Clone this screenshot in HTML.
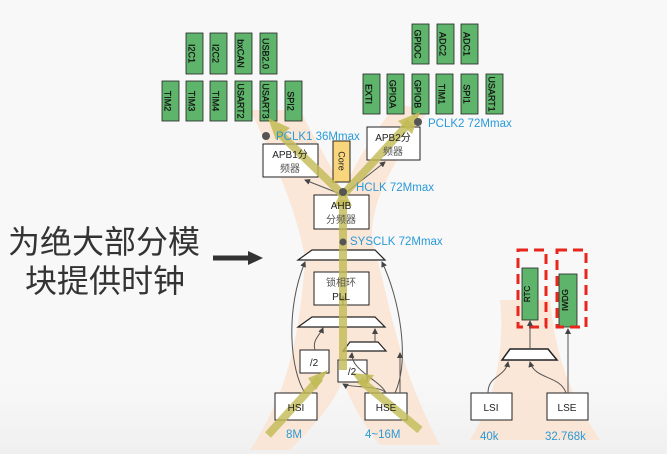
<!DOCTYPE html>
<html><head><meta charset="utf-8"><style>
html,body{margin:0;padding:0;}
body{width:667px;height:454px;overflow:hidden;background:linear-gradient(#f8f8f8,#f8f8f8 380px,#f0f0f0 454px);font-family:"Liberation Sans","Noto Sans CJK SC",sans-serif;}
svg{position:absolute;left:0;top:0;}
</style></head><body>
<svg width="667" height="454" viewBox="0 0 667 454" xmlns="http://www.w3.org/2000/svg">
<defs>
<marker id="ah" markerWidth="6" markerHeight="6" refX="5" refY="3" orient="auto"><path d="M0,0 L6,3 L0,6 z" fill="#444"/></marker>
</defs>
<path d="M250,110 L300,110 C320,150 335,170 343,195 C350,170 370,140 395,105 L430,108 C395,160 370,200 372,240 C390,300 395,360 440,445 L380,445 C360,420 350,400 343,380 C335,400 320,420 290,450 L250,450 C290,390 300,330 305,260 C300,220 275,160 250,110 Z" fill="#fbe4d4" opacity="0.9"/>
<path d="M500,300 L550,300 C555,340 560,380 600,440 L470,440 C495,400 505,350 500,300 Z" fill="#fbe4d4" opacity="0.9"/>
<text x="8" y="253" font-size="32" fill="#333" font-family="Noto Sans CJK SC,sans-serif">为绝大部分模</text>
<text x="25" y="292" font-size="32" fill="#333" font-family="Noto Sans CJK SC,sans-serif">块提供时钟</text>
<line x1="213" y1="258" x2="250" y2="258" stroke="#333" stroke-width="5"/>
<path d="M248,251 L263,258 L248,265 Z" fill="#333"/>
<g stroke="#222" stroke-width="0.8" fill="#5fb46c">
<rect x="186" y="33" width="17" height="41"/><rect x="210" y="33" width="17" height="41"/><rect x="235" y="33" width="17" height="41"/><rect x="260" y="33" width="17" height="41"/>
<rect x="162" y="81" width="17" height="40"/><rect x="186" y="81" width="17" height="40"/><rect x="210" y="81" width="17" height="40"/><rect x="235" y="81" width="17" height="40"/><rect x="260" y="81" width="17" height="40"/><rect x="285" y="81" width="17" height="40"/>
<rect x="412" y="24" width="17" height="40"/><rect x="437" y="24" width="17" height="40"/><rect x="461" y="24" width="17" height="40"/>
<rect x="363" y="74" width="17" height="40"/><rect x="387" y="74" width="17" height="40"/><rect x="412" y="74" width="17" height="40"/><rect x="436" y="74" width="17" height="40"/><rect x="461" y="74" width="17" height="40"/><rect x="486" y="74" width="17" height="40"/>
<rect x="522" y="268" width="16" height="52"/><rect x="559" y="274" width="18" height="53"/>
</g>
<g font-family="Liberation Sans,sans-serif" font-size="9" fill="#111" stroke="#111" stroke-width="0.25" text-anchor="middle">
<text transform="translate(191.5,53.5) rotate(90)" dy="3">I2C1</text>
<text transform="translate(215.5,53.5) rotate(90)" dy="3">I2C2</text>
<text transform="translate(240.5,53.5) rotate(90)" dy="3">bxCAN</text>
<text transform="translate(265.5,53.5) rotate(90)" dy="3">USB2.0</text>
<text transform="translate(167.5,101) rotate(90)" dy="3">TIM2</text>
<text transform="translate(191.5,101) rotate(90)" dy="3">TIM3</text>
<text transform="translate(215.5,101) rotate(90)" dy="3">TIM4</text>
<text transform="translate(240.5,101) rotate(90)" dy="3">USART2</text>
<text transform="translate(265.5,101) rotate(90)" dy="3">USART3</text>
<text transform="translate(290.5,101) rotate(90)" dy="3">SPI2</text>
<text transform="translate(417.5,44) rotate(90)" dy="3">GPIOC</text>
<text transform="translate(442.5,44) rotate(90)" dy="3">ADC2</text>
<text transform="translate(466.5,44) rotate(90)" dy="3">ADC1</text>
<text transform="translate(368.5,94) rotate(90)" dy="3">EXTI</text>
<text transform="translate(392.5,94) rotate(90)" dy="3">GPIOA</text>
<text transform="translate(417.5,94) rotate(90)" dy="3">GPIOB</text>
<text transform="translate(441.5,94) rotate(90)" dy="3">TIM1</text>
<text transform="translate(466.5,94) rotate(90)" dy="3">SPI1</text>
<text transform="translate(491.5,94) rotate(90)" dy="3">USART1</text>
<text transform="translate(527,294) rotate(-90)" dy="3" font-size="8">RTC</text>
<text transform="translate(565,300) rotate(-90)" dy="3" font-size="8">IWDG</text>
</g>
<rect x="518" y="250" width="28" height="77" fill="none" stroke="#e8261c" stroke-width="3" stroke-dasharray="10,6"/>
<rect x="557" y="250" width="29" height="77" fill="none" stroke="#e8261c" stroke-width="3" stroke-dasharray="10,6"/>
<g fill="#fff" stroke="#222" stroke-width="1">
<rect x="263" y="144" width="55" height="33"/>
<rect x="333" y="141" width="17" height="41" fill="#f9d57c"/>
<rect x="367" y="127" width="53" height="33"/>
<rect x="314" y="195" width="55" height="34"/>
<rect x="314" y="272" width="55" height="33"/>
<rect x="300" y="350" width="29" height="23"/>
<rect x="338" y="360" width="29" height="22"/>
<rect x="275" y="393" width="42" height="27"/>
<rect x="365" y="393" width="42" height="27"/>
<rect x="471" y="393" width="41" height="27"/>
<rect x="547" y="393" width="41" height="27"/>
<path d="M312,250 L375,250 L385,260 L298,260 Z" stroke-width="1.2"/>
<path d="M312,317 L375,317 L385,327 L298,327 Z" stroke-width="1.2"/>
<path d="M350,342 L378,342 L386,351 L343,351 Z" stroke-width="1.2"/>
<path d="M510,349 L548,349 L557,360 L502,360 Z" stroke-width="1.5"/>
</g>
<g fill="none" stroke="#555" stroke-width="1" marker-end="url(#ah)">
<path d="M343,195 L305,180"/><path d="M343,195 L385,162"/>
<path d="M343,305 L343,296"/>
<path d="M305,393 C290,370 285,310 305,262"/>
<path d="M395,393 C410,360 400,300 382,262"/>
<path d="M315,350 C312,340 320,335 323,328"/>
<path d="M375,342 L375,329"/>
<path d="M386,393 C380,385 350,388 343,384"/>
<path d="M386,393 C380,380 350,370 352,353"/>
<path d="M400,393 L400,353"/>
<path d="M530,349 L530,321"/>
<path d="M568,393 L568,329"/>
<path d="M488,393 C488,375 505,378 508,362"/>
<path d="M566,393 C560,375 535,380 530,362"/>
</g>
<g stroke="#c2bb55" stroke-width="8" fill="none" opacity="0.8" stroke-linejoin="round">
<path d="M343,370 L343,200"/>
<path d="M343,195 L278,132"/>
<path d="M343,195 L410,122"/>
<path d="M268,435 L320,378"/>
<path d="M420,430 L360,380"/>
</g>
<g fill="#c2bb55" opacity="0.85">
<path d="M268,118 L290,128 L276,140 Z"/>
<path d="M420,112 L412,134 L398,121 Z"/>
<path d="M343,188 L352,206 L334,206 Z"/>
<path d="M328,370 L316,390 L308,378 Z"/>
<path d="M352,373 L374,375 L364,389 Z"/>
</g>
<g fill="#555"><circle cx="266" cy="136" r="4"/><circle cx="418" cy="122" r="4"/><circle cx="343" cy="192" r="4"/><circle cx="343" cy="242" r="3.5"/></g>
<g font-family="Liberation Sans,'Noto Sans CJK SC',sans-serif" font-size="10" fill="#222" text-anchor="middle">
<text x="290" y="158">APB1分</text><text x="290" y="172" fill="#555">频器</text>
<text x="393" y="141">APB2分</text><text x="393" y="155" fill="#555">频器</text>
<text transform="translate(341.5,161) rotate(90)" dy="3" font-size="9">Core</text>
<text x="341" y="209">AHB</text><text x="341" y="223" fill="#555">分频器</text>
<text x="341" y="286" fill="#555">锁相环</text><text x="341" y="300">PLL</text>
<text x="314" y="366">/2</text><text x="352" y="375">/2</text>
<text x="296" y="411">HSI</text><text x="386" y="411">HSE</text>
<text x="491" y="411">LSI</text><text x="567" y="411">LSE</text>
</g>
<g font-family="Liberation Sans,sans-serif" font-size="11.5" fill="#2a9ad8">
<text x="276" y="140">PCLK1 36Mmax</text>
<text x="428" y="127">PCLK2 72Mmax</text>
<text x="356" y="191">HCLK 72Mmax</text>
<text x="350" y="245">SYSCLK 72Mmax</text>
<text x="286" y="438">8M</text>
<text x="365" y="438">4~16M</text>
<text x="480" y="440">40k</text>
<text x="545" y="440">32.768k</text>
</g>
</svg>
</body></html>
